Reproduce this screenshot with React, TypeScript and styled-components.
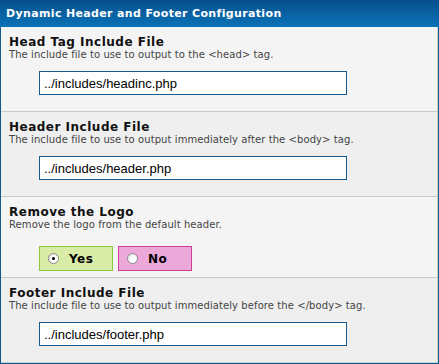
import styled, { createGlobalStyle } from "styled-components";

const GlobalStyle = createGlobalStyle`
  html, body {
    margin: 0;
    padding: 0;
    background: #ffffff;
  }
  * {
    box-sizing: border-box;
  }
`;

const Panel = styled.div`
  width: 439px;
  font-family: "DejaVu Sans", Verdana, sans-serif;
`;

const Header = styled.div`
  height: 27px;
  padding: 0 6px;
  display: flex;
  align-items: center;
  background: linear-gradient(#07508b, #0a72b8);
  color: #ffffff;
  font-size: 11px;
  letter-spacing: 0.35px;
  font-weight: bold;
`;

const Body = styled.div`
  border: 1px solid #0f5a8f;
  border-top: none;
`;

const Inner = styled.div`
  border-right: 1px solid #cfcfcf;
  border-bottom: 1px solid #cfcfcf;
`;

const Section = styled.div<{ $alt?: boolean; $tight?: boolean }>`
  background: ${(p) => (p.$alt ? "#efefef" : "#f4f4f4")};
  padding: 8px 8px ${(p) => (p.$tight ? "6px" : "16px")};
  & + & {
    border-top: 1px solid #c9c9c9;
  }
`;

const Title = styled.div`
  font-size: 12px;
  line-height: 14px;
  letter-spacing: 0.5px;
  font-weight: bold;
  color: #111111;
`;

const Desc = styled.div`
  font-size: 10px;
  line-height: 12px;
  letter-spacing: 0.08px;
  color: #444444;
`;

const Input = styled.input`
  display: block;
  margin: 10px 0 0 30px;
  width: 308px;
  height: 24px;
  padding: 0 4px;
  border: 1px solid #155a8c;
  border-radius: 0;
  background: #ffffff;
  font-family: "Liberation Sans", Arial, sans-serif;
  font-size: 13px;
  color: #000000;
  outline: none;
`;

const Choices = styled.div`
  display: flex;
  gap: 5px;
  margin: 15px 0 0 30px;
`;

const Choice = styled.label<{ $tone: "yes" | "no" }>`
  width: 74px;
  height: 25px;
  display: flex;
  align-items: center;
  gap: 10px;
  padding-left: 8px;
  background: ${(p) => (p.$tone === "yes" ? "#d8eca8" : "#eca8d8")};
  border: 1px solid ${(p) => (p.$tone === "yes" ? "#8cc63f" : "#d03c96")};
  font-size: 12px;
  letter-spacing: 0.5px;
  font-weight: bold;
  color: #000000;
`;

const Radio = styled.span<{ $checked?: boolean }>`
  position: relative;
  flex: none;
  width: 11px;
  height: 11px;
  border-radius: 50%;
  border: 1px solid #8a8a8a;
  background: radial-gradient(circle at 65% 65%, #ffffff 40%, #d8d8d8 100%);
  &::after {
    content: "";
    display: ${(p) => (p.$checked ? "block" : "none")};
    position: absolute;
    left: 3px;
    top: 3px;
    width: 3px;
    height: 3px;
    border-radius: 50%;
    background: #000000;
  }
`;

const fields = [
  {
    title: "Head Tag Include File",
    desc: "The include file to use to output to the <head> tag.",
    value: "../includes/headinc.php",
  },
  {
    title: "Header Include File",
    desc: "The include file to use to output immediately after the <body> tag.",
    value: "../includes/header.php",
  },
];

export default function App() {
  return (
    <Panel>
      <GlobalStyle />
      <Header>Dynamic Header and Footer Configuration</Header>
      <Body>
        <Inner>
          {fields.map((f, i) => (
            <Section key={f.title} $alt={i % 2 === 1}>
              <Title>{f.title}</Title>
              <Desc>{f.desc}</Desc>
              <Input defaultValue={f.value} />
            </Section>
          ))}
          <Section $tight>
            <Title>Remove the Logo</Title>
            <Desc>Remove the logo from the default header.</Desc>
            <Choices>
              <Choice $tone="yes">
                <Radio $checked />
                Yes
              </Choice>
              <Choice $tone="no">
                <Radio />
                No
              </Choice>
            </Choices>
          </Section>
          <Section $alt>
            <Title>Footer Include File</Title>
            <Desc>The include file to use to output immediately before the &lt;/body&gt; tag.</Desc>
            <Input defaultValue="../includes/footer.php" />
          </Section>
        </Inner>
      </Body>
    </Panel>
  );
}
